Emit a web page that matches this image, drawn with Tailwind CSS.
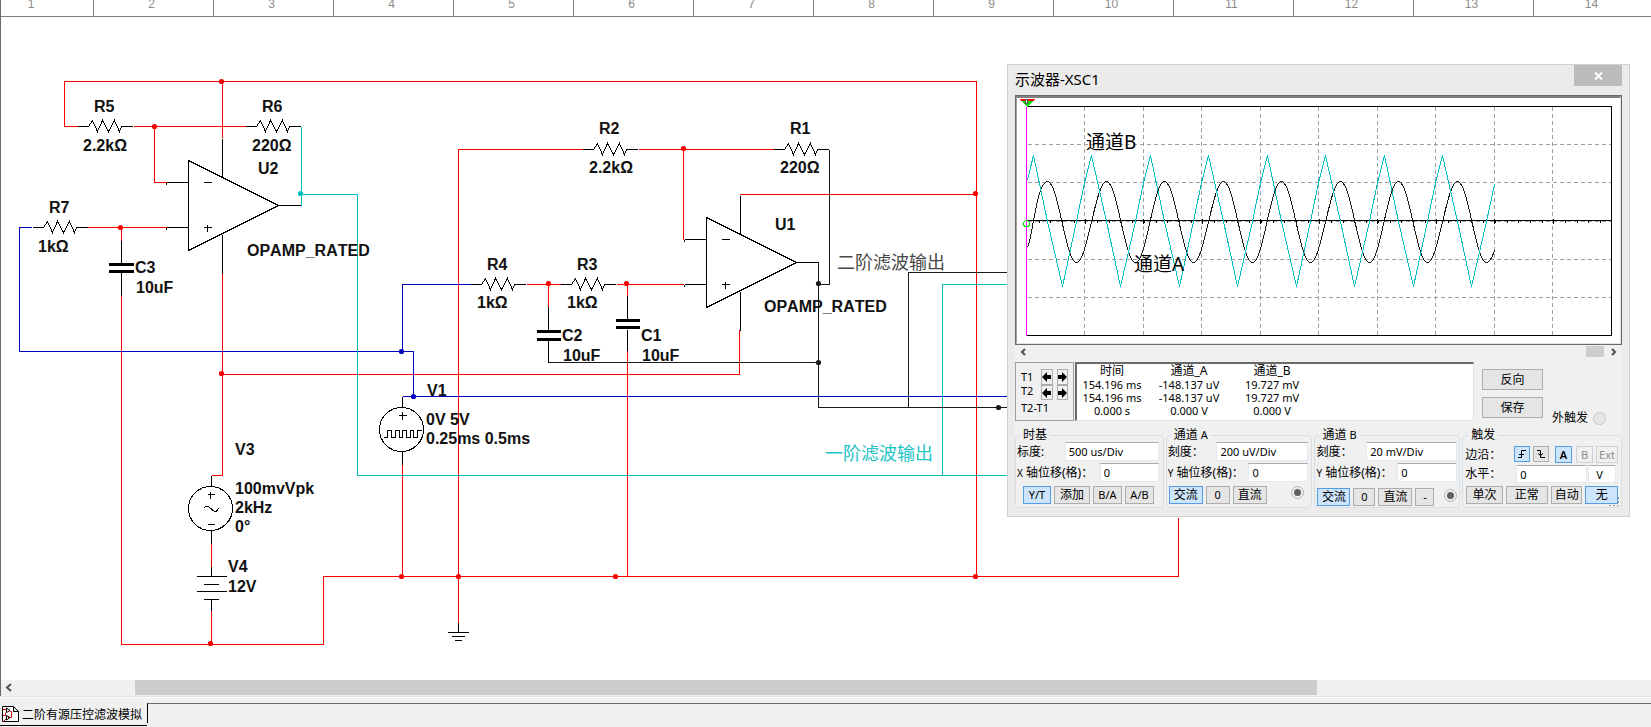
<!DOCTYPE html>
<html lang="zh-CN">
<head>
<meta charset="utf-8">
<title>二阶有源压控滤波模拟</title>
<script src="https://cdn.jsdelivr.net/npm/@tailwindcss/browser@4"></script>
</head>
<body class="h-screen flex flex-col overflow-hidden bg-white font-['Noto_Sans','Noto_Sans_CJK_SC',sans-serif] text-black">

<main class="relative flex-1 min-h-0 flex flex-col border-l border-[#696969] overflow-hidden">
  <!-- ruler -->
  <div class="h-[17px] shrink-0 border-b border-[#808080] overflow-hidden">
    <div class="-ml-7 flex h-4 w-max font-['Liberation_Sans',sans-serif] text-xs leading-[8px] text-[#8c8c8c] text-center">
      <span class="w-[121px] pr-1 border-r border-[#808080]">1</span><span class="w-[120px] pr-1 border-r border-[#808080]">2</span><span class="w-[120px] pr-1 border-r border-[#808080]">3</span><span class="w-[120px] pr-1 border-r border-[#808080]">4</span><span class="w-[120px] pr-1 border-r border-[#808080]">5</span><span class="w-[120px] pr-1 border-r border-[#808080]">6</span><span class="w-[120px] pr-1 border-r border-[#808080]">7</span><span class="w-[120px] pr-1 border-r border-[#808080]">8</span><span class="w-[120px] pr-1 border-r border-[#808080]">9</span><span class="w-[120px] pr-1 border-r border-[#808080]">10</span><span class="w-[120px] pr-1 border-r border-[#808080]">11</span><span class="w-[120px] pr-1 border-r border-[#808080]">12</span><span class="w-[120px] pr-1 border-r border-[#808080]">13</span><span class="w-[120px] pr-1 border-r border-[#808080]">14</span>
    </div>
  </div>

  <!-- schematic -->
  <div class="flex-1 min-h-0 overflow-hidden">
    <svg width="1650" height="663" fill="none" stroke-width="1">
      <defs>
        <path id="res" d="M-11 0H0l4-6 5 11 5-11 6 11 6-11 5 11 2-5h11"/>
        <g id="amp"><path d="M0 0V90L90 45ZM-22 22H0M-22 22v2M-22 67H0M-22 67v2M90 45h22M15 22h8M15 67h8M19 64v7M34 16v-38M34 74v39"/></g>
      </defs>
      <g transform="translate(-0.5 -16.5)" shape-rendering="crispEdges">
        <g stroke="#ff0000">
          <path d="M77 126H64V81H976V576M222 81V137M133 126H245M154 126V182H166M87 227H166M121 227V240M121 295V644H323V576H1178V517M222 272V475H211M222 374H739V329M211 543V566M211 610V644M402 464V576M583 149H458V622M638 149H773M683 149V239M526 284H560M616 284H683M548 284V306M627 284V295M627 350V576M739 194H976"/>
        </g>
        <g stroke="#0000c0">
          <path d="M31 227H19V351H413V396M402 351V284H470M402 396H1008"/>
        </g>
        <g stroke="#00bfbf">
          <path d="M301 126V205M301 194H357V475H1008M942 475V284H1008"/>
        </g>
        <g stroke="#1a1a1a">
          <path d="M829 149V284H818M548 362H818M818 262V407H1008M908 407V272H1008"/>
        </g>
        <g stroke="#000">
          <use href="#res" x="88" y="126"/><use href="#res" x="256" y="126"/><use href="#res" x="43" y="227"/>
          <use href="#res" x="593" y="149"/><use href="#res" x="784" y="149"/><use href="#res" x="481" y="284"/><use href="#res" x="571" y="284"/>
          <use href="#amp" x="188" y="160"/><use href="#amp" x="706" y="217"/>
          <path d="M121 240V263M121 272V295M548 306V330M548 340V362M627 295V319M627 329V350"/>
          <path stroke-width="3" d="M108 264H133M108 271H133M536 331H560M536 339H560M615 320H639M615 327H639"/>
          <path d="M211 475V486M211 530V543M207 494H214M210 491V498M207 524H214M211 566V576M196 576H226M203 584H218M196 591H226M203 599H218M211 599V610"/>
          <path d="M203 508Q206 504 209 507L214 511Q216 512 218 508"/>
          <path d="M402 396V407M402 451V464M398 415H406M402 411V419M383 437H387V430H391V437H395V430H399V437H402V430H406V437H410V430H413V437H417V430H421"/>
          <circle cx="210" cy="508" r="22"/><circle cx="401" cy="429" r="22"/>
          <path d="M458 622V632M447 632H468M451 636H464M454 640H461"/>
        </g>
      </g>
      <g transform="translate(-0.5 -16.5)">
        <g fill="#ff0000">
          <circle cx="221" cy="81" r="2.600"/><circle cx="154" cy="126" r="2.600"/><circle cx="120" cy="227" r="2.600"/><circle cx="221" cy="373" r="2.600"/><circle cx="210" cy="643" r="2.600"/><circle cx="401" cy="576" r="2.600"/><circle cx="458" cy="576" r="2.600"/><circle cx="615" cy="576" r="2.600"/><circle cx="975" cy="576" r="2.600"/><circle cx="975" cy="193" r="2.600"/><circle cx="683" cy="148" r="2.600"/><circle cx="548" cy="283" r="2.600"/><circle cx="626" cy="283" r="2.600"/>
        </g>
        <g fill="#0000c0"><circle cx="401" cy="351" r="2.600"/><circle cx="413" cy="396" r="2.600"/></g>
        <circle cx="300" cy="193" r="2.600" fill="#00bfbf"/>
        <g fill="#1a1a1a"><circle cx="818" cy="283" r="2.600"/><circle cx="818" cy="362" r="2.600"/><circle cx="998" cy="407" r="2.600"/></g>
      </g>
      <g transform="translate(-1 -17)" fill="#111" class="font-['Liberation_Sans',sans-serif] font-bold text-base [font-kerning:none]">
        <text x="94" y="112">R5</text><text x="83" y="151">2.2kΩ</text>
        <text x="262" y="112">R6</text><text x="252" y="151">220Ω</text>
        <text x="258" y="174">U2</text><text x="247" y="256">OPAMP_RATED</text>
        <text x="49" y="213">R7</text><text x="38" y="252">1kΩ</text>
        <text x="135" y="273">C3</text><text x="136" y="293">10uF</text>
        <text x="235" y="455">V3</text><text x="235" y="494">100mvVpk</text><text x="235" y="513">2kHz</text><text x="235" y="532">0°</text>
        <text x="228" y="572">V4</text><text x="228" y="592">12V</text>
        <text x="427" y="396">V1</text><text x="426" y="425">0V 5V</text><text x="426" y="444">0.25ms 0.5ms</text>
        <text x="599" y="134">R2</text><text x="589" y="173">2.2kΩ</text>
        <text x="790" y="134">R1</text><text x="780" y="173">220Ω</text>
        <text x="775" y="230">U1</text><text x="764" y="312">OPAMP_RATED</text>
        <text x="487" y="270">R4</text><text x="477" y="308">1kΩ</text>
        <text x="577" y="270">R3</text><text x="567" y="308">1kΩ</text>
        <text x="562" y="341">C2</text><text x="563" y="361">10uF</text>
        <text x="641" y="341">C1</text><text x="642" y="361">10uF</text>
      </g>
      <g transform="translate(-1 -17)" class="font-['Noto_Sans_CJK_SC',sans-serif] text-[18px]">
        <text x="837" y="269" fill="#484848">二阶滤波输出</text>
        <text x="825" y="460" fill="#20c4c4">一阶滤波输出</text>
      </g>
    </svg>
  </div>

  <!-- sheet scrollbar -->
  <div class="h-4 shrink-0 flex items-start bg-[#f0f0f0]">
    <button aria-label="向左滚动" class="w-[134px] h-[15px] pl-1 flex items-center"><svg width="8" height="9" fill="none" stroke="#505050" stroke-width="2"><path d="M6 1L2 4.500L6 8"/></svg></button>
    <div class="h-[15px] w-[1182px] bg-[#cdcdcd]"></div>
  </div>

  <!-- oscilloscope window -->
  <section class="absolute left-[1006px] top-16 w-[623px] h-[453px] flex flex-col bg-[#ebebeb] border border-[#d0d0d0] px-[7px] pb-2">
    <header class="h-[30px] shrink-0 flex items-start justify-between">
      <h1 class="text-[15px] leading-7">示波器-XSC1</h1>
      <button aria-label="关闭" class="w-12 h-[21px] bg-[#bcbcbc] flex items-center justify-center"><svg width="9" height="8" stroke="#fff" stroke-width="2"><path d="M1 .5L8 7.500M8 .5L1 7.500"/></svg></button>
    </header>
    <div class="flex-1 bg-[#f0f0f0] flex flex-col">
      <div class="h-[250px] shrink-0 bg-white border border-[#696969]">
        <div class="h-full border border-t-2 border-l-[#a0a0a0] border-t-[#808080] border-r-[#e3e3e3] border-b-[#e3e3e3]">
          <svg width="602" height="245" class="block" fill="none">
            <g transform="translate(-1016.5 -97.5)" shape-rendering="crispEdges">
              <path stroke="#a0a0a0" stroke-dasharray="4 3" d="M1084 106V335M1143 106V335M1201 106V335M1260 106V335M1318 106V335M1377 106V335M1435 106V335M1494 106V335M1552 106V335"/>
              <path stroke="#a0a0a0" stroke-dasharray="4 3" d="M1027 144H1611M1027 182H1611M1027 221H1611M1027 259H1611M1027 297H1611"/>
              <path stroke="#000" d="M1026 106H1611V335H1026M1026 220H1611"/>
              <path stroke="#000" stroke-width="3" stroke-dasharray="1 10.700" d="M1038 221H1611"/>
              <path stroke="#000" stroke-width="5" stroke-dasharray="1 57.500" d="M1084 221H1611"/>
              <path stroke="#1a1a1a" d="M1027 247C1032 238 1036 181 1047 181S1065 262 1076 262S1095 181 1106 181S1124 262 1135 262S1153 181 1164 181S1182 262 1193 262S1212 181 1223 181S1241 262 1252 262S1270 181 1281 181S1299 262 1310 262S1329 181 1340 181S1358 262 1369 262S1387 181 1398 181S1416 262 1427 262S1446 181 1457 181S1475 262 1486 262Q1490 262 1494 250"/>
              <path stroke="#00bfbf" d="M1027 180L1030 167L1033 155L1047 221L1062 286L1076 221L1084 182L1091 155L1106 221L1120 286L1135 221L1143 182L1150 155L1164 221L1179 286L1193 221L1201 182L1208 155L1223 221L1237 286L1252 221L1260 182L1267 155L1281 221L1296 286L1310 221L1318 182L1325 155L1340 221L1354 286L1369 221L1377 182L1384 155L1398 221L1413 286L1427 221L1435 182L1442 155L1457 221L1471 286L1486 221L1494 184"/>
              <path stroke="#ff00ff" d="M1026 106V335"/>
              <path fill="#ff0000" d="M1018 98H1035L1033 100H1020Z"/><path fill="#00e600" d="M1020 100H1033L1027 106H1026Z"/>
              <path fill="#fff" stroke="#555" d="M1025 99h2v4h-2z"/>
              <circle cx="1026" cy="223" r="3" stroke="#00e600"/>
            </g>
            <g transform="translate(-1017 -98)" fill="#000" class="text-[19px] font-['Noto_Sans','Noto_Sans_CJK_SC',sans-serif]">
              <text x="1086" y="149">通道B</text><text x="1134" y="271">通道A</text>
            </g>
          </svg>
        </div>
      </div>
      <div class="h-[13px] shrink-0 flex items-center justify-between px-[5px]">
        <button aria-label="向左"><svg width="7" height="8" fill="none" stroke="#505050" stroke-width="2"><path d="M5 1L2 4L5 7"/></svg></button>
        <div class="flex items-center gap-1.5"><span class="w-[18px] h-[11px] bg-[#cdcdcd]"></span>
        <button aria-label="向右"><svg width="7" height="8" fill="none" stroke="#505050" stroke-width="2"><path d="M2 1L5 4L2 7"/></svg></button></div>
      </div>
      <div class="mt-1 h-[59px] shrink-0 flex gap-[1px] text-[11px]">
        <div class="w-[59px] shrink-0 border border-[#a0a0a0] p-[5px] pt-1.5 flex flex-col leading-[15px]">
          <div class="flex h-[17px] gap-1"><span class="w-4 shrink-0">T1</span>
            <button aria-label="T1 左移" class="w-[13px] h-4 border border-[#adadad] flex items-center justify-center"><svg class="shrink-0" width="9" height="10" fill="#000"><path d="M0 5L5 0V3H9V7H5V10Z"/></svg></button>
            <button aria-label="T1 右移" class="w-[13px] h-4 border border-[#adadad] flex items-center justify-center"><svg class="shrink-0" width="9" height="10" fill="#000"><path d="M9 5L4 0V3H0V7H4V10Z"/></svg></button></div>
          <div class="flex h-[17px] gap-1"><span class="w-4 shrink-0 leading-3">T2</span>
            <button aria-label="T2 左移" class="w-[13px] h-[15px] border border-[#adadad] flex items-center justify-center"><svg class="shrink-0" width="9" height="10" fill="#000"><path d="M0 5L5 0V3H9V7H5V10Z"/></svg></button>
            <button aria-label="T2 右移" class="w-[13px] h-[15px] border border-[#adadad] flex items-center justify-center"><svg class="shrink-0" width="9" height="10" fill="#000"><path d="M9 5L4 0V3H0V7H4V10Z"/></svg></button></div>
          <span class="whitespace-nowrap">T2-T1</span>
        </div>
        <div class="w-[399px] shrink-0 bg-white border border-t-2 border-l-2 border-t-[#696969] border-l-[#696969] border-r-[#e3e3e3] border-b-[#e3e3e3]">
          <table class="w-[236px] table-fixed text-center leading-[13px]">
            <colgroup><col class="w-[70px]"><col class="w-[84px]"><col class="w-[82px]"></colgroup>
            <thead><tr class="text-xs leading-[14px]"><th class="font-normal p-0">时间</th><th class="font-normal p-0">通道_A</th><th class="font-normal p-0">通道_B</th></tr></thead>
            <tbody>
              <tr><td class="p-0">154.196 ms</td><td class="p-0">-148.137 uV</td><td class="p-0">19.727 mV</td></tr>
              <tr><td class="p-0">154.196 ms</td><td class="p-0">-148.137 uV</td><td class="p-0">19.727 mV</td></tr>
              <tr><td class="p-0">0.000 s</td><td class="p-0">0.000 V</td><td class="p-0">0.000 V</td></tr>
            </tbody>
          </table>
        </div>
        <div class="pl-[7px] pt-[7px] flex flex-col gap-[7px] text-xs">
          <button class="w-[61px] h-[21px] border border-[#adadad] bg-[#e5e5e5]">反向</button>
          <button class="w-[61px] h-[21px] border border-[#adadad] bg-[#e5e5e5]">保存</button>
        </div>
        <label class="self-end ml-2 -mb-1 flex items-center gap-[5px] text-xs leading-[14px] whitespace-nowrap">外触发<input type="radio" disabled class="appearance-none size-[13px] rounded-full border border-[#c4c4c4] bg-[#e6e6e6]"></label>
      </div>

      <div class="mt-[7px] grid grid-cols-[148fr_146fr_145fr_159fr] gap-[2px] text-xs">
        <fieldset class="min-w-0 h-20 border border-[#d5dfe5] rounded-sm pl-px pr-1">
          <legend class="ml-[3px] px-[3px] leading-[14px]">时基</legend>
          <div class="flex flex-col gap-[2px]">
            <label class="h-[19px] flex items-center justify-between whitespace-nowrap">标度:<input value="500 us/Div" class="w-[94px] h-[19px] px-[3px] bg-white border border-[#e3e9ef] border-t-[#abadb3] text-[11px]"></label>
            <label class="h-[19px] flex items-center justify-between whitespace-nowrap"><span class="w-20 overflow-hidden"><span class="text-[10px]">X</span> 轴位移(格)：</span><input value="0" class="w-[59px] h-[19px] px-[3px] bg-white border border-[#e3e9ef] border-t-[#abadb3] text-[11px]"></label>
          </div>
          <div class="mt-1 pl-1.5 flex gap-[3px]">
            <button class="w-7 h-[18px] border border-[#569de5] bg-[#cce4fc] text-[11px] leading-4">Y/T</button>
            <button class="w-9 h-[18px] border border-[#adadad] bg-[#e5e5e5] leading-4">添加</button>
            <button class="w-[29px] h-[18px] border border-[#adadad] bg-[#e5e5e5] text-[11px] leading-4">B/A</button>
            <button class="w-[29px] h-[18px] border border-[#adadad] bg-[#e5e5e5] text-[11px] leading-4">A/B</button>
          </div>
        </fieldset>
        <fieldset class="min-w-0 h-20 border border-[#d5dfe5] rounded-sm pl-px pr-[3px]">
          <legend class="ml-[3px] px-[3px] leading-[14px]">通道 <span class="text-[11px]">A</span></legend>
          <div class="flex flex-col gap-[2px]">
            <label class="h-[19px] flex items-center justify-between whitespace-nowrap">刻度：<input value="200 uV/Div" class="w-[92px] h-[19px] px-[3px] bg-white border border-[#e3e9ef] border-t-[#abadb3] text-[11px]"></label>
            <label class="h-[19px] flex items-center justify-between whitespace-nowrap"><span class="w-20 overflow-hidden"><span class="text-[10px]">Y</span> 轴位移(格)：</span><input value="0" class="w-[60px] h-[19px] px-[3px] bg-white border border-[#e3e9ef] border-t-[#abadb3] text-[11px]"></label>
          </div>
          <div class="mt-1 pl-px pr-1 flex gap-[3px]">
            <button class="w-[34px] h-[18px] border border-[#569de5] bg-[#cce4fc] leading-4">交流</button>
            <button class="w-6 h-[18px] border border-[#adadad] bg-[#e5e5e5] text-[11px] leading-4">0</button>
            <button class="w-[34px] h-[18px] border border-[#adadad] bg-[#e5e5e5] leading-4">直流</button>
            <input type="radio" name="chA" checked aria-label="通道 A" class="mt-px mr-px ml-auto appearance-none size-[11px] rounded-full border-2 border-[#eee] bg-[#606060] outline outline-[#b4b4b4]">
          </div>
        </fieldset>
        <fieldset class="min-w-0 h-20 border border-[#d5dfe5] rounded-sm pl-px pr-0.5">
          <legend class="ml-[3px] px-[3px] leading-[14px]">通道 <span class="text-[11px]">B</span></legend>
          <div class="flex flex-col gap-[2px]">
            <label class="h-[19px] flex items-center justify-between whitespace-nowrap">刻度：<input value="20 mV/Div" class="w-[91px] h-[19px] px-[3px] bg-white border border-[#e3e9ef] border-t-[#abadb3] text-[11px]"></label>
            <label class="h-[19px] flex items-center justify-between whitespace-nowrap"><span class="w-20 overflow-hidden"><span class="text-[10px]">Y</span> 轴位移(格)：</span><input value="0" class="w-[60px] h-[19px] px-[3px] bg-white border border-[#e3e9ef] border-t-[#abadb3] text-[11px]"></label>
          </div>
          <div class="mt-1.5 pl-px flex gap-[3px]">
            <button class="w-[33px] h-[18px] border border-[#569de5] bg-[#cce4fc] leading-4">交流</button>
            <button class="w-[22px] h-[18px] border border-[#adadad] bg-[#e5e5e5] text-[11px] leading-4">0</button>
            <button class="w-[34px] h-[18px] border border-[#adadad] bg-[#e5e5e5] leading-4">直流</button>
            <button class="w-[19px] h-[18px] border border-[#adadad] bg-[#e5e5e5] text-[11px] leading-4">-</button>
            <input type="radio" name="chB" checked aria-label="通道 B" class="mt-0.5 mr-px ml-auto appearance-none size-[11px] rounded-full border-2 border-[#eee] bg-[#606060] outline outline-[#b4b4b4]">
          </div>
        </fieldset>
        <fieldset class="min-w-0 h-20 border border-[#d5dfe5] rounded-sm pl-0.5 pr-[3px]">
          <legend class="ml-[3px] px-[3px] leading-[14px]">触发</legend>
          <div class="flex h-[21px] items-end justify-between">
            <span class="w-11 whitespace-nowrap">边沿：</span>
            <div class="flex items-start gap-[3px] text-[11px]">
              <button aria-label="上升沿" class="size-4 border border-[#569de5] bg-[#cce4fc] flex items-center justify-center"><svg width="10" height="10" fill="none" stroke="#000"><path d="M1 8.500H4.500V1.500H9M2 5.500H7"/></svg></button>
              <button aria-label="下降沿" class="size-4 border border-[#adadad] bg-[#e5e5e5] flex items-center justify-center"><svg width="10" height="10" fill="none" stroke="#000"><path d="M1 1.500H4.500V8.500H9M2 4.500L4.500 6.500L7 4.500"/></svg></button>
              <button class="ml-[3px] w-[17px] h-[17px] border border-[#569de5] bg-[#cce4fc] leading-[15px] font-semibold">A</button>
              <button disabled class="ml-px w-[17px] h-[17px] border border-[#d0d0d0] leading-[15px] text-[#8c8c8c]">B</button>
              <button disabled class="w-[22px] h-[17px] border border-[#d0d0d0] leading-[15px] text-[#8c8c8c]">Ext</button>
            </div>
          </div>
          <div class="mt-[2px] h-[18px] flex items-center gap-px">
            <label for="lvl" class="w-[50px] whitespace-nowrap">水平：</label>
            <input id="lvl" value="0" class="w-[71px] h-[18px] px-[3px] bg-white border border-[#e3e9ef] border-t-[#abadb3] text-[11px]">
            <input aria-label="单位" value="V" class="w-7 h-[18px] px-[7px] bg-white border border-[#e3e9ef] border-t-[#abadb3] text-[11px]">
          </div>
          <div class="mt-[3px] pl-px flex gap-[3px]">
            <button class="w-[37px] h-[18px] border border-[#adadad] bg-[#e5e5e5] leading-4">单次</button>
            <button class="w-[43px] h-[18px] border border-[#adadad] bg-[#e5e5e5] leading-4">正常</button>
            <button class="w-8 h-[18px] border border-[#adadad] bg-[#e5e5e5] leading-4">自动</button>
            <button class="w-[33px] h-[18px] border border-[#569de5] bg-[#cce4fc] leading-4">无</button>
          </div>
        </fieldset>
      </div>
    </div>
    <svg class="absolute right-2.5 bottom-2.5" width="10" height="10" fill="none" stroke="#999" stroke-dasharray="2 2"><path d="M9.500 1V9.500M0 9.500H9"/></svg>
  </section>
</main>

<!-- sheet tabs -->
<footer class="h-[31px] shrink-0 flex bg-[#f0f0f0] border-t border-[#e3e3e3]">
  <div class="flex-1 flex border-t border-white">
    <button class="w-[147px] h-7 pl-0.5 pt-1.5 flex items-center gap-[3px] border-b border-black text-xs whitespace-nowrap">
      <svg width="17" height="17" fill="#fff" stroke="#000"><path d="M.5 .5H11.500L16.500 5.500V15.500H.5ZM11.500 .5V5.500H16.500"/><path fill="none" stroke="#e00000" d="M1 3.500H4M8 5.500H9.500V11.500H6M1 9.500H3.500V6.500M2 15L5 12"/><path fill="none" d="M4.500 2V6.500L8 4.500ZM4.500 9.500V14L8 11.500Z"/></svg>
      <span>二阶有源压控滤波模拟</span>
    </button>
    <div class="mt-[5px] mb-1 flex-1 border-t border-t-[#696969] border-l border-l-black"></div>
  </div>
</footer>
</body>
</html>
